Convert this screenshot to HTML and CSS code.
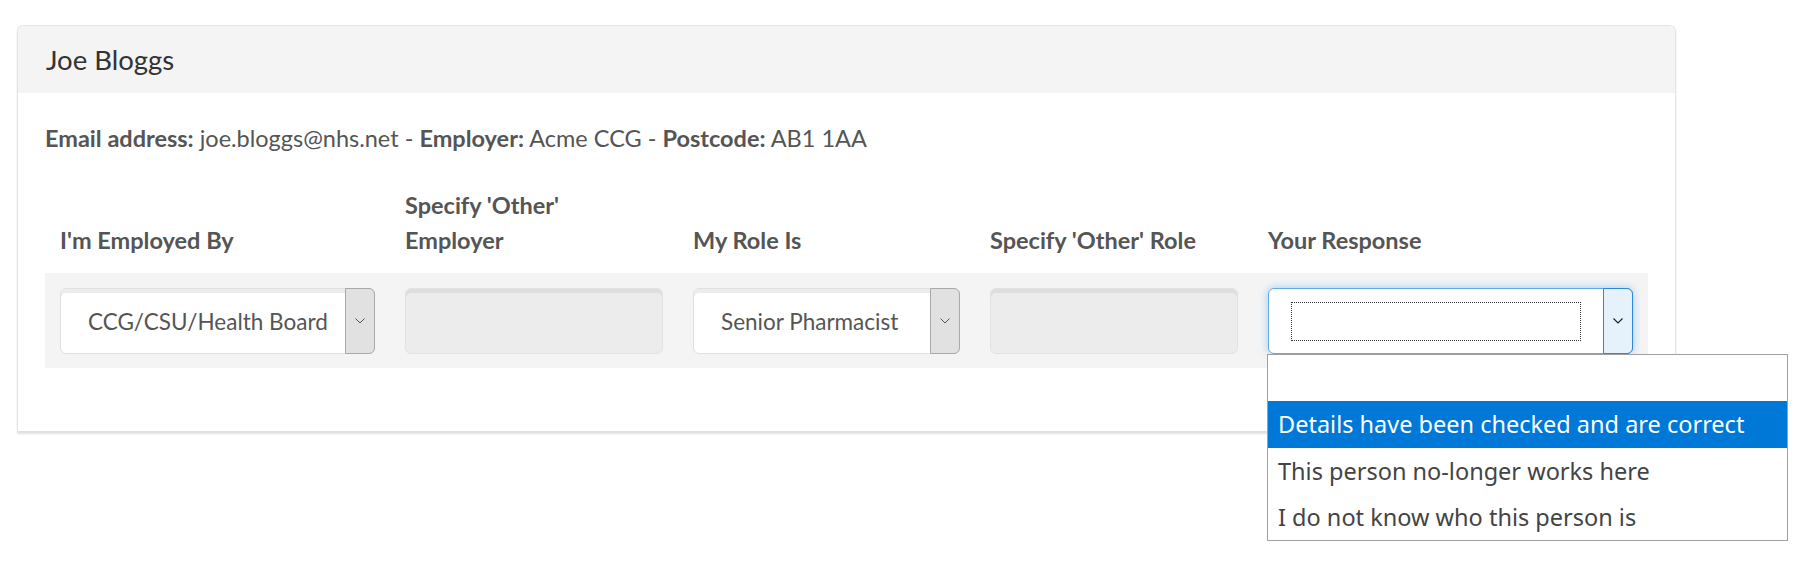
FILE: index.html
```html
<!DOCTYPE html>
<html lang="en">
<head>
<meta charset="utf-8">
<title>Joe Bloggs</title>
<link rel="stylesheet" href="styles.css">
</head>
<body>
<div class="card">
  <div class="card-header">Joe Bloggs</div>
  <div class="card-body">
    <p class="details"><b>Email address:</b> joe.bloggs@nhs.net - <b>Employer:</b> Acme CCG - <b>Postcode:</b> AB1 1AA</p>
    <div class="grid">
      <div class="th">I'm Employed By</div>
      <div class="th">Specify 'Other'<br>Employer</div>
      <div class="th">My Role Is</div>
      <div class="th">Specify 'Other' Role</div>
      <div class="th">Your Response</div>

      <div class="td">
        <div class="select">
          <span class="value">CCG/CSU/Health Board</span>
          <span class="arrow"><svg width="10" height="6" viewBox="0 0 10 6"><polyline points="0.5,0.5 5,5 9.5,0.5" fill="none" stroke="#555" stroke-width="1"/></svg></span>
        </div>
      </div>
      <div class="td"><div class="input"></div></div>
      <div class="td">
        <div class="select">
          <span class="value">Senior Pharmacist</span>
          <span class="arrow"><svg width="10" height="6" viewBox="0 0 10 6"><polyline points="0.5,0.5 5,5 9.5,0.5" fill="none" stroke="#555" stroke-width="1"/></svg></span>
        </div>
      </div>
      <div class="td"><div class="input"></div></div>
      <div class="td">
        <div class="select focused">
          <span class="value"><span class="focus-ring"></span></span>
          <span class="arrow"><svg width="10" height="6" viewBox="0 0 10 6"><polyline points="0.5,0.5 5,5 9.5,0.5" fill="none" stroke="#222" stroke-width="1.2"/></svg></span>
          <ul class="dropdown">
            <li class="opt"></li>
            <li class="opt selected">Details have been checked and are correct</li>
            <li class="opt">This person no-longer works here</li>
            <li class="opt">I do not know who this person is</li>
          </ul>
        </div>
      </div>
    </div>
  </div>
</div>
</body>
</html>
```

FILE: styles.css
```css
html, body {
  background: #ffffff;
  min-height: 569px;
}

body {
  margin: 0;
  padding: 25px 0 0 17px;
  box-sizing: border-box;
  font-family: "Lato", "Liberation Sans", sans-serif;
  color: #555555;
}

.card {
  width: 1659px;
  box-sizing: border-box;
  border: 1px solid #e4e4e4;
  border-bottom: none;
  border-radius: 6px 6px 0 0;
  box-shadow: 0 3px 2px rgba(0, 0, 0, 0.12);
  background: #ffffff;
}

.card-header {
  height: 67px;
  box-sizing: border-box;
  display: flex;
  align-items: center;
  padding: 0 28px;
  background: #f4f4f4;
  border-radius: 6px 6px 0 0;
  font-size: 27.5px;
  color: #333333;
}

.card-body {
  padding: 27px 27px 63px;
}

.details {
  margin: 0 0 24px;
  font-size: 23.5px;
  line-height: 36px;
  color: #555555;
}

.details b {
  font-weight: 700;
}

.grid {
  display: grid;
  grid-template-columns: 345px 288px 297px 278px 395px;
}

.th {
  align-self: end;
  padding: 8px 15px 15px;
  font-size: 23.5px;
  font-weight: 700;
  line-height: 35px;
  white-space: nowrap;
  color: #555555;
}

.td {
  background: #f4f4f4;
  padding: 15px 15px 14px;
}

.select {
  position: relative;
  display: flex;
  height: 66px;
  box-sizing: border-box;
  border: 1px solid #e0e0e0;
  border-radius: 6px;
  background: #ffffff;
  box-shadow: inset 0 4px 0 #ececec;
}

.value {
  flex: 1;
  display: flex;
  align-items: center;
  min-width: 0;
  padding-left: 27px;
  overflow: hidden;
  white-space: nowrap;
  font-size: 22.5px;
  color: #555555;
}

.arrow {
  width: 30px;
  box-sizing: border-box;
  margin: -1px -1px -1px 0;
  display: flex;
  align-items: center;
  justify-content: center;
  background: #e1e1e1;
  border: 1px solid #a9a9a9;
  border-radius: 0 6px 6px 0;
}

.input {
  height: 66px;
  box-sizing: border-box;
  border: 1px solid #e2e2e2;
  border-radius: 6px;
  background: #ececec;
  box-shadow: inset 0 4px 0 #dedede;
}

.select.focused {
  border-color: #62a9e6;
  box-shadow: 0 0 8px rgba(102, 175, 233, 0.6);
}

.select.focused .value {
  padding: 13px 22px 12px 22px;
  align-items: stretch;
}

.focus-ring {
  flex: 1;
  border: 1px dotted #333333;
}

.select.focused .arrow {
  background: #e5f1fb;
  border-color: #2f86d8;
}

.dropdown {
  position: absolute;
  top: calc(100% + 1px);
  left: -2px;
  width: 521px;
  box-sizing: border-box;
  margin: 0;
  padding: 0;
  list-style: none;
  background: #ffffff;
  border: 1px solid #a0a0a0;
  font-family: "Noto Sans", "Liberation Sans", sans-serif;
  font-size: 23.5px;
  color: #444444;
  z-index: 10;
}

.opt {
  height: 46.25px;
  display: flex;
  align-items: center;
  padding-left: 10px;
  white-space: nowrap;
}

.opt.selected {
  background: #0078d7;
  color: #ffffff;
}
```
